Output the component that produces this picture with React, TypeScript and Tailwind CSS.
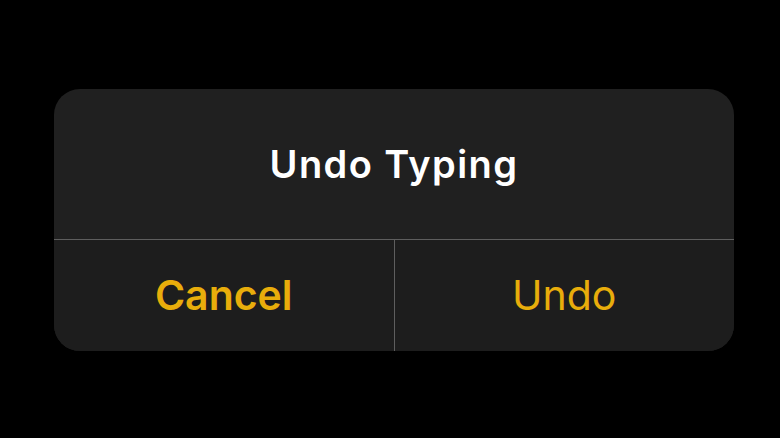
export default function App() {
    return (
        <div className="w-[780px] h-[438px] bg-black flex items-center justify-center pl-[8px] pt-[2px]" style={{ fontFamily: "Inter, 'Liberation Sans', sans-serif" }}>
            <div className="w-[680px] h-[262px] rounded-[26px] bg-[#202020] flex flex-col overflow-hidden">
                <div className="h-[151px] flex items-center justify-center border-b border-[#5e5e5e]">
                    <span className="text-white text-[38px] font-semibold tracking-[1.4px]">Undo Typing</span>
                </div>
                <div className="flex-1 flex bg-[#1d1d1d]">
                    <button className="flex-1 flex items-center justify-center text-[#e8ad0b] text-[41px] font-semibold border-r border-[#5e5e5e]">
                        Cancel
                    </button>
                    <button className="flex-1 flex items-center justify-center text-[#e8ad0b] text-[41px] font-normal">
                        Undo
                    </button>
                </div>
            </div>
        </div>
    );
}
